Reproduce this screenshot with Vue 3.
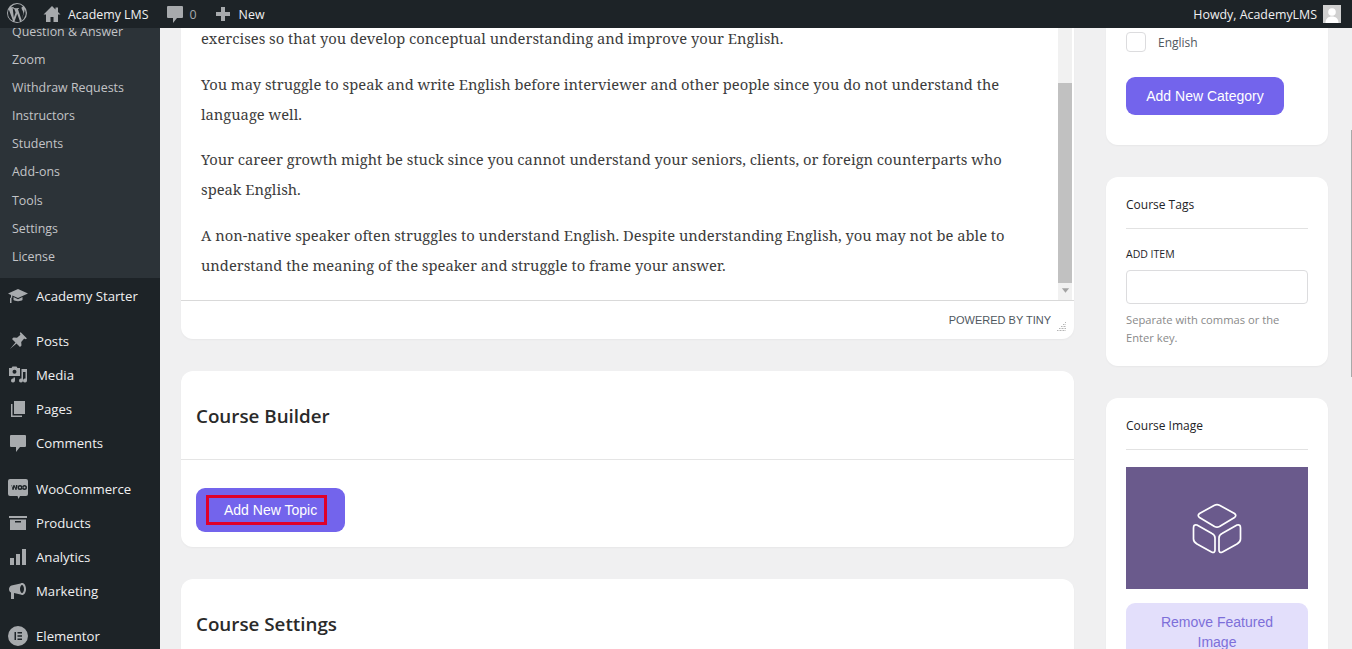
<script setup>
const subItems = ['Question & Answer','Zoom','Withdraw Requests','Instructors','Students','Add-ons','Tools','Settings','License']
const paragraphs = [
  'exercises so that you develop conceptual understanding and improve your English.',
  'You may struggle to speak and write English before interviewer and other people since you do not understand the language well.',
  'Your career growth might be stuck since you cannot understand your seniors, clients, or foreign counterparts who speak English.',
  'A non-native speaker often struggles to understand English. Despite understanding English, you may not be able to understand the meaning of the speaker and struggle to frame your answer.'
]
</script>

<template>
  <div class="page">
    <header class="adminbar">
      <div class="bar-left">
        <svg class="wp" viewBox="0 0 20 20"><path fill="#a7aaad" fill-rule="evenodd" d="M10 0a10 10 0 1 0 0 20 10 10 0 0 0 0-20Zm0 1a9 9 0 0 1 6.100 2.400c-.9 0-1.600.8-1.600 1.700 0 .8.5 1.500 1 2.300.4.7.8 1.500.8 2.700 0 .9-.3 1.900-.8 3.300l-1 3.300-3.600-10.800.9-.1c.4 0 .4-.7 0-.7l-2.700.2-2.600-.2c-.5 0-.5.7 0 .7l.8.1 1.300 3.500-1.800 5.400L5.700 4.900l.9-.1c.4 0 .4-.7 0-.7l-2.800.1A9 9 0 0 1 10 1ZM1 10c0-1.300.3-2.500.8-3.600l4.300 11.700A9 9 0 0 1 1 10Zm9 9c-.9 0-1.700-.1-2.500-.4l2.700-7.800 2.700 7.500.1.100c-.9.400-1.900.6-3 .6Zm4.200-1 2.700-7.900c.5-1.300.7-2.300.7-3.200l-.1-1A9 9 0 0 1 14.200 18Z"/></svg>
        <span class="bar-item site">
          <svg class="bar-ico" viewBox="0 0 20 20"><path fill="#a7aaad" d="M10 2 1.500 10.500h2.500V18h4.500v-5h3v5H16v-7.500h2.500L16 8V3.500h-2.500v2L10 2Z"/></svg>
          Academy LMS
        </span>
        <span class="bar-item comments">
          <svg class="bar-ico" viewBox="0 0 20 20"><path fill="#a7aaad" d="M3 2h14a1 1 0 0 1 1 1v10a1 1 0 0 1-1 1h-5l-4 5v-5H3a1 1 0 0 1-1-1V3a1 1 0 0 1 1-1Z"/></svg>
          <span class="count">0</span>
        </span>
        <span class="bar-item new">
          <svg class="bar-ico" viewBox="0 0 20 20"><path fill="#a7aaad" d="M8 3h4v5h5v4h-5v5H8v-5H3V8h5V3Z"/></svg>
          New
        </span>
      </div>
      <div class="bar-right">
        <span>Howdy, AcademyLMS</span>
        <svg class="avatar" viewBox="0 0 18 18"><rect width="18" height="18" fill="#d0d0d0"/><circle cx="9" cy="7" r="3.800" fill="#fff"/><path fill="#fff" d="M2.500 18c0-4.500 3-6.500 6.500-6.500s6.500 2 6.500 6.500Z"/></svg>
      </div>
    </header>

    <div class="body">
      <aside class="sidebar">
        <ul class="submenu">
          <li v-for="s in subItems" :key="s">{{ s }}</li>
        </ul>
        <div class="menu-item starter">
          <svg class="mi" viewBox="0 0 20 20"><path fill="#a7aaad" d="M10 3 0 7.500l3 1.400v2.600l-1 .5V17h1.500v-5l.8-.4V9.500L10 12l10-4.500L10 3Zm-4.500 8v3c1.500 1.500 7.500 1.500 9 0v-3L10 13.200 5.500 11Z"/></svg>
          Academy Starter
        </div>
        <div class="menu-item first">
          <svg class="mi" viewBox="0 0 20 20"><path fill="#a7aaad" d="m12.500 1 6.500 6.500-1.800.7-1-.7-3 3.500.3 3.500-1.500 1.500-3.500-3.500L2 18l5.500-6.500L4 8l1.500-1.500 3.500.3 3.500-3-.7-1L12.500 1Z"/></svg>
          Posts
        </div>
        <div class="menu-item">
          <svg class="mi" viewBox="0 0 20 20"><path fill="#a7aaad" fill-rule="evenodd" d="M1 3h2.500l1-1.500h4L9.500 3H12v8H1V3Zm5.500 1.800a2 2 0 1 0 0 4 2 2 0 0 0 0-4ZM13.500 4H19v11.500a2 2 0 1 1-1.500-1.900V7h-2.500v8.500a2 2 0 1 1-1.500-1.900V4ZM7 12.500v3a2 2 0 1 1-1.500-1.900v-1.100H7Z"/></svg>
          Media
        </div>
        <div class="menu-item">
          <svg class="mi" viewBox="0 0 20 20"><path fill="#a7aaad" d="M6 2h11v13H6V2Zm-3 3h1.500v11.500H14V18H3V5Z"/></svg>
          Pages
        </div>
        <div class="menu-item">
          <svg class="mi" viewBox="0 0 20 20"><path fill="#a7aaad" d="M3 2h14a1 1 0 0 1 1 1v10a1 1 0 0 1-1 1h-5l-4 5v-5H3a1 1 0 0 1-1-1V3a1 1 0 0 1 1-1Z"/></svg>
          Comments
        </div>
        <div class="menu-item group">
          <svg class="mi" viewBox="0 0 20 20"><path fill="#a7aaad" fill-rule="evenodd" d="M2 0h16a2 2 0 0 1 2 2v13a2 2 0 0 1-2 2h-6l-1.500 3-1-3H2a2 2 0 0 1-2-2V2a2 2 0 0 1 2-2Zm1.500 6 1 5h1l1-3 1 3h1l1-5H8l-.5 3-1-3h-1l-1 3-.5-3h-.5Zm8.500 0a2.500 2.500 0 0 0 0 5 2.500 2.500 0 0 0 0-5Zm4.500 0a2.500 2.500 0 0 0 0 5 2.500 2.500 0 0 0 0-5Zm-4.500 1.500a1 1 0 1 1 0 2 1 1 0 0 1 0-2Zm4.500 0a1 1 0 1 1 0 2 1 1 0 0 1 0-2Z"/></svg>
          WooCommerce
        </div>
        <div class="menu-item">
          <svg class="mi" viewBox="0 0 20 20"><path fill="#a7aaad" fill-rule="evenodd" d="M1 3h18v2H1V3Zm1 3.500h16V17H2V6.500Zm5 1.500v1.500h6V8H7Z"/></svg>
          Products
        </div>
        <div class="menu-item">
          <svg class="mi" viewBox="0 0 20 20"><path fill="#a7aaad" d="M2 11h4v7H2v-7Zm6-4h4v11H8V7Zm6-5h4v16h-4V2Z"/></svg>
          Analytics
        </div>
        <div class="menu-item">
          <svg class="mi" viewBox="0 0 20 20"><path fill="#a7aaad" fill-rule="evenodd" d="M14 2c2.500 0 4 2.700 4 6s-1.500 6-4 6c-.5 0-1-.1-1.400-.4L6 12v6H3v-6.500C1.800 11 1 9.600 1 8c0-1.700 1-3 2.500-3.600L12.600 2.400c.4-.3.900-.4 1.400-.4Zm0 2c-1 0-2 1.700-2 4s1 4 2 4 2-1.700 2-4-1-4-2-4Z"/></svg>
          Marketing
        </div>
        <div class="menu-item elementor">
          <svg class="mi" viewBox="0 0 20 20"><path fill="#a7aaad" fill-rule="evenodd" d="M10 0a10 10 0 1 0 0 20 10 10 0 0 0 0-20ZM6.500 6H8v8H6.500V6Zm3 0h4.500v1.500H9.500V6Zm0 3.200h4.500v1.600H9.500V9.200Zm0 3.300h4.500V14H9.500v-1.500Z"/></svg>
          Elementor
        </div>
      </aside>

      <main class="content">
        <div class="col-main">
          <section class="card editor">
            <div class="editor-body">
              <div class="editor-text">
                <p v-for="p in paragraphs" :key="p">{{ p }}</p>
              </div>
              <div class="scrollbar">
                <div class="thumb"></div>
                <svg class="arrow" viewBox="0 0 10 6"><path fill="#a3a3a3" d="M1 0h8L5 5Z"/></svg>
              </div>
            </div>
            <div class="status">
              <span>POWERED BY TINY</span>
              <svg class="grip" viewBox="0 0 10 10"><path stroke="#b5b5b5" fill="none" stroke-dasharray="1 .5" d="M8 1.500h1M6 3.500h3M4 5.500h5M2 7.500h7M0 9.500h9"/></svg>
            </div>
          </section>

          <section class="card builder">
            <h2 class="card-head">Course Builder</h2>
            <div class="builder-body">
              <button class="btn topic"><span class="topic-mark">Add New Topic</span></button>
            </div>
          </section>

          <section class="card settings">
            <h2 class="card-head">Course Settings</h2>
          </section>
        </div>

        <div class="col-side">
          <section class="side-card categories">
            <label class="check"><span class="box"></span>English</label>
            <button class="btn cat">Add New Category</button>
          </section>

          <section class="side-card">
            <h3 class="side-head">Course Tags</h3>
            <div class="add-label">ADD ITEM</div>
            <div class="tag-input"></div>
            <p class="help">Separate with commas or the Enter key.</p>
          </section>

          <section class="side-card">
            <h3 class="side-head">Course Image</h3>
            <div class="image">
              <svg viewBox="0 0 50 51" class="cube" fill="none" stroke="#fff" stroke-width="1.700" stroke-linejoin="round">
                <path d="M22.500 2.200Q25 1 27.500 2.200L42.500 10.500Q45 12.500 42.500 14.500L27.500 23.500Q25 24.800 22.500 23.500L7.500 14.500Q5 12.500 7.500 10.500Z"/>
                <path d="M1.500 25Q1.500 21 5 22L20 30.500Q23 32 23 35V47Q23 50.500 19.500 49L5 41Q1.500 39 1.500 36Z"/>
                <path d="M48.500 25Q48.500 21 45 22L30 30.500Q27 32 27 35V47Q27 50.500 30.500 49L45 41Q48.500 39 48.500 36Z"/>
              </svg>
            </div>
            <button class="btn remove">Remove Featured Image</button>
          </section>
        </div>
      </main>
    </div>
    <div class="page-scroll"></div>
  </div>
</template>

<style>
html, body { margin: 0; height: 100%; overflow: hidden; background: #f0f0f1; }
</style>

<style scoped>
.page { position: relative; width: 1352px; height: 649px; display: flex; flex-direction: column; overflow: hidden; font-family: "Open Sans", "Noto Sans", sans-serif; color: #1d2327; background: #f0f0f1; }
.page-scroll { position: absolute; right: 0; top: 130px; width: 1px; height: 247px; background: #a9a9a9; }
.adminbar { height: 28px; flex: none; background: #1d2327; color: #f0f0f1; display: flex; justify-content: space-between; align-items: center; font-size: 12.400px; z-index: 2; }
.bar-left { display: flex; align-items: center; }
.wp { width: 20px; height: 20px; margin-left: 7px; margin-top: -2px; }
.bar-item { display: flex; align-items: center; white-space: nowrap; }
.bar-ico { width: 20px; height: 20px; flex: none; }
.site { margin-left: 15px; gap: 6px; }
.comments { margin-left: 16px; gap: 5px; }
.count { color: #a7aaad; }
.new { margin-left: 16px; gap: 6px; }
.bar-right { display: flex; align-items: center; gap: 6px; padding-right: 11px; }
.avatar { width: 18px; height: 18px; }
.body { flex: 1; display: flex; min-height: 0; }
.sidebar { width: 160px; flex: none; background: #1d2327; color: #f0f0f1; font-size: 13.200px; overflow: hidden; }
.submenu { list-style: none; margin: 0; padding: 0 0 8px; background: #2c3338; color: #c3c4c7; height: 250px; box-sizing: border-box; overflow: hidden; font-size: 12.400px; }
.submenu li { height: 28.200px; line-height: 28.200px; padding-left: 12px; white-space: nowrap; }
.submenu li:first-child { margin-top: -10.500px; }
.menu-item { height: 34px; display: flex; align-items: center; gap: 8px; padding-left: 8px; white-space: nowrap; }
.mi { width: 20px; height: 20px; flex: none; }
.starter { margin-top: 1px; }
.first { margin-top: 11px; }
.group { margin-top: 12px; }
.elementor { margin-top: 11px; }
.content { flex: 1; display: flex; align-items: flex-start; gap: 32px; padding-left: 21px; min-width: 0; overflow: hidden; }
.col-main { width: 893px; flex: none; display: flex; flex-direction: column; gap: 32px; }
.col-side { width: 222px; flex: none; display: flex; flex-direction: column; gap: 32px; }
.card { background: #fff; border-radius: 12px; box-shadow: 0 1px 2px rgba(0,0,0,.04); }
.editor { border-radius: 0 0 12px 12px; }
.editor-body { display: flex; height: 272px; border-bottom: 1px solid #d9d9d9; overflow: hidden; }
.editor-text { flex: 1; padding: 0 20px; font-family: "Noto Serif", "DejaVu Serif", serif; font-size: 14.720px; line-height: 30px; color: #3c3c3c; margin-top: -5px; }
.editor-text p { margin: 0 0 15.700px; }
.scrollbar { width: 14px; margin-right: 2px; background: #f1f1f1; display: flex; flex-direction: column; align-items: center; justify-content: flex-end; position: relative; }
.thumb { position: absolute; left: 0; right: 0; top: 55px; height: 200px; background: #c1c1c1; }
.arrow { width: 9px; height: 6px; margin-bottom: 6px; }
.status { height: 38px; display: flex; align-items: center; justify-content: flex-end; gap: 6px; padding-right: 7px; font-family: "Liberation Sans", sans-serif; font-size: 11px; color: #50575e; }
.grip { width: 10px; height: 10px; margin-top: 11px; }
.card-head { margin: 0; font-size: 18.800px; font-weight: 600; color: #2a2a2a; height: 88px; line-height: 90px; padding-left: 15px; }
.builder .card-head { border-bottom: 1px solid #e5e5e5; }
.builder-body { padding: 28px 15px 15px; }
.btn { border: none; font-family: "Liberation Sans", sans-serif; font-size: 14px; display: block; }
.topic { width: 149px; height: 44px; background: #7364ec; border-radius: 9px; color: #fff; padding: 0 0 0 10px; display: flex; align-items: center; justify-content: flex-start; }
.topic-mark { width: 121px; height: 30px; border: 3px solid #e0002a; box-sizing: border-box; display: flex; align-items: center; justify-content: flex-start; padding-left: 15px; white-space: nowrap; }
.settings { height: 120px; }
.side-card { background: #fff; border-radius: 12px; padding: 0 20px; box-shadow: 0 1px 2px rgba(0,0,0,.04); }
.categories { height: 117px; box-sizing: border-box; padding-top: 4px; border-radius: 0 0 12px 12px; }
.check { display: flex; align-items: center; gap: 12px; font-size: 12px; color: #50575e; height: 20px; }
.box { width: 20px; height: 20px; box-sizing: border-box; border: 1px solid #dcdcde; border-radius: 4px; background: #fff; }
.cat { width: 158px; height: 38px; margin-top: 25px; border-radius: 9px; background: #7364ec; color: #fff; }
.side-head { margin: 0; height: 51px; line-height: 55px; font-size: 12px; font-weight: 500; color: #1d2327; border-bottom: 1px solid #e2e2e2; }
.add-label { font-size: 10.500px; margin-top: 18px; line-height: 14px; color: #1d2327; }
.tag-input { height: 32px; border: 1px solid #dcdcde; border-radius: 4px; margin-top: 9px; }
.help { margin: 7px 0 0; padding: 0 20px 19px 0; font-size: 11.200px; line-height: 18px; color: #8a8a8a; }
.image { height: 122px; margin-top: 17px; background: #6a5a8c; display: flex; align-items: center; justify-content: center; }
.cube { width: 50px; height: 51px; }
.remove { width: 100%; margin-top: 14px; background: #e3dffb; color: #7d6fd9; border-radius: 9px; padding: 9px 20px; line-height: 20px; }
</style>
